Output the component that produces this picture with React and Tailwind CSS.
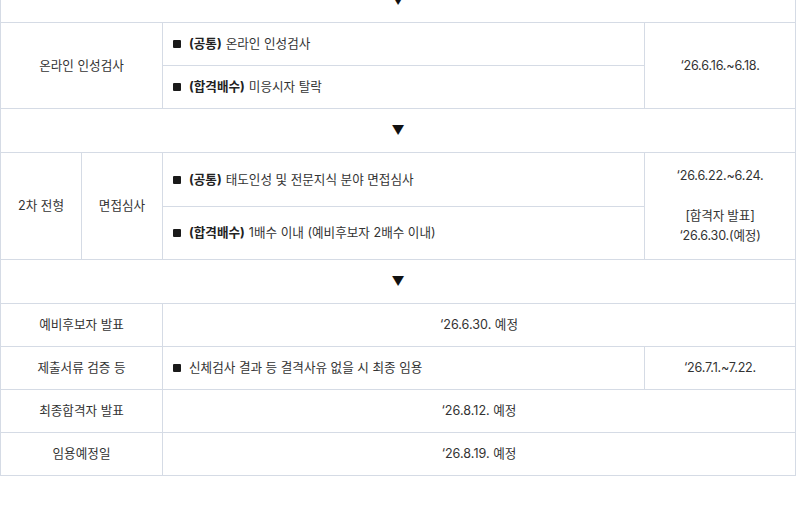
import React from "react";

const cell = "border border-[#d5dbe5] px-[10px] py-[11px] leading-[20px]";

const Arrow = () => (
  <tr>
    <td colSpan={4} className={`${cell} text-center`}>
      <span className="text-[13px] text-[#111]">▼</span>
    </td>
  </tr>
);

const Item = ({ label, children }) => (
  <div className="flex items-center">
    <span className="mr-[8px] inline-block h-[8px] w-[8px] rounded-[1px] bg-[#1a1a1a]" />
    {label && <b className="mr-[4px] font-bold text-[#222]">{label}</b>}
    <span>{children}</span>
  </div>
);

export default function App() {
  return (
    <div className="min-h-[506px] w-[800px] overflow-hidden bg-white">
      <table
        className="-mt-[22px] w-[796px] table-fixed border-collapse text-[12.6px] text-[#333]"
        style={{ fontFamily: 'Inter, "Noto Sans CJK KR", sans-serif' }}
      >
        <colgroup>
          <col className="w-[81px]" />
          <col className="w-[81px]" />
          <col className="w-[482px]" />
          <col />
        </colgroup>
        <tbody>
          <Arrow />
          <tr>
            <td colSpan={2} rowSpan={2} className={`${cell} text-center`}>
              온라인 인성검사
            </td>
            <td className={cell}>
              <Item label="(공통)">온라인 인성검사</Item>
            </td>
            <td rowSpan={2} className={`${cell} text-center tracking-[-0.2px]`}>
              ‘26.6.16.~6.18.
            </td>
          </tr>
          <tr>
            <td className={cell}>
              <Item label="(합격배수)">미응시자 탈락</Item>
            </td>
          </tr>
          <Arrow />
          <tr>
            <td rowSpan={2} className={`${cell} text-center`}>
              2차 전형
            </td>
            <td rowSpan={2} className={`${cell} text-center`}>
              면접심사
            </td>
            <td className={`${cell} pt-[17px] pb-[16px]`}>
              <Item label="(공통)">태도인성 및 전문지식 분야 면접심사</Item>
            </td>
            <td rowSpan={2} className={`${cell} text-center tracking-[-0.2px]`}>
              ‘26.6.22.~6.24.
              <br />
              <br />
              [합격자 발표]
              <br />
              ‘26.6.30.(예정)
            </td>
          </tr>
          <tr>
            <td className={`${cell} py-[16px]`}>
              <Item label="(합격배수)">1배수 이내 (예비후보자 2배수 이내)</Item>
            </td>
          </tr>
          <Arrow />
          <tr>
            <td colSpan={2} className={`${cell} text-center`}>
              예비후보자 발표
            </td>
            <td colSpan={2} className={`${cell} text-center`}>
              ‘26.6.30. 예정
            </td>
          </tr>
          <tr>
            <td colSpan={2} className={`${cell} text-center`}>
              제출서류 검증 등
            </td>
            <td className={cell}>
              <Item>신체검사 결과 등 결격사유 없을 시 최종 임용</Item>
            </td>
            <td className={`${cell} text-center tracking-[-0.2px]`}>‘26.7.1.~7.22.</td>
          </tr>
          <tr>
            <td colSpan={2} className={`${cell} text-center`}>
              최종합격자 발표
            </td>
            <td colSpan={2} className={`${cell} text-center`}>
              ‘26.8.12. 예정
            </td>
          </tr>
          <tr>
            <td colSpan={2} className={`${cell} text-center`}>
              임용예정일
            </td>
            <td colSpan={2} className={`${cell} text-center`}>
              ‘26.8.19. 예정
            </td>
          </tr>
        </tbody>
      </table>
    </div>
  );
}
